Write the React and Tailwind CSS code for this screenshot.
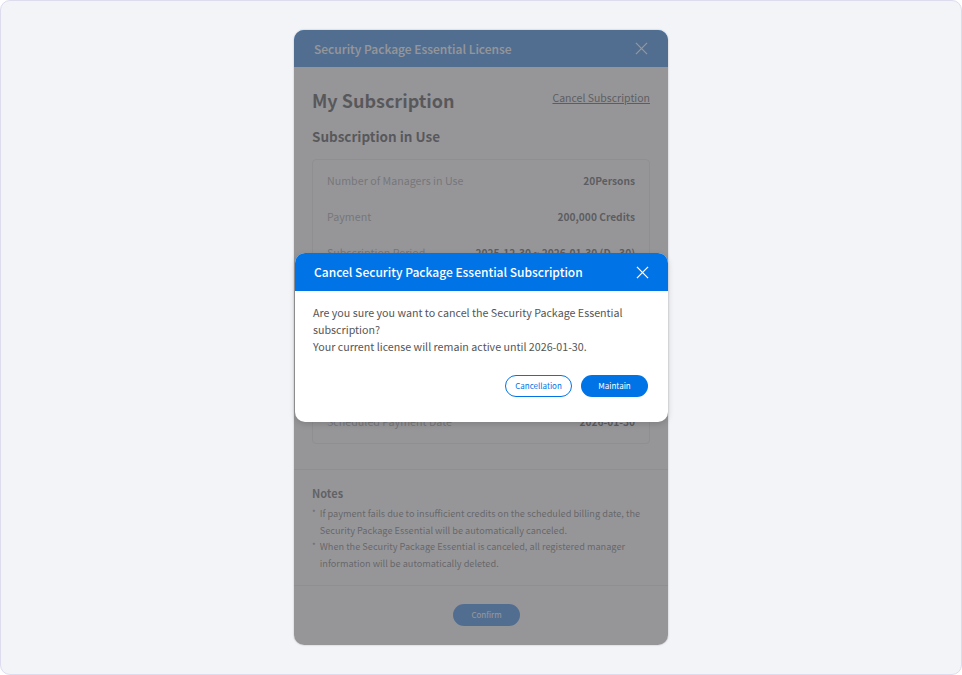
import React from "react";

const font = { fontFamily: '"Noto Sans CJK KR", "Noto Sans", sans-serif' };

function CloseIcon({ className }) {
  return (
    <svg className={className} viewBox="0 0 14 14" fill="none" stroke="currentColor" strokeWidth="1.3">
      <path d="M1 1L13 13M13 1L1 13" />
    </svg>
  );
}

const rows = [
  ["Number of Managers in Use", "20Persons"],
  ["Payment", "200,000 Credits"],
  ["Subscription Period", "2025-12-30 ~ 2026-01-30 (D - 30)"],
  ["Automatic Payment", "Enabled"],
  ["Payment Method", "Credits"],
  ["Remaining Credits", "850,000 Credits"],
];

export default function App() {
  return (
    <div
      className="relative w-full h-[675px] bg-[#f3f4f8] border border-[#dcdcee] rounded-[10px] flex justify-center pt-[29px] overflow-hidden"
      style={font}
    >
      {/* base modal */}
      <div className="relative w-[374px] h-[615px] bg-white rounded-[10px] overflow-hidden flex flex-col shadow-[0_0_2px_rgba(0,0,0,0.25)]">
        <div className="h-[37px] shrink-0 bg-[#0a6fe0] px-[20px] flex items-center justify-between">
          <span className="text-[12px] font-medium text-white">Security Package Essential License</span>
          <CloseIcon className="w-[13px] h-[13px] text-white" />
        </div>

        <div className="px-[18px] pt-[20px] pb-[25px]">
          <div className="flex items-start justify-between">
            <h1 className="text-[18px] font-bold text-[#222] leading-[26px]">My Subscription</h1>
            <span className="text-[10.5px] text-[#333] underline mt-[3px]">Cancel Subscription</span>
          </div>
          <h2 className="mt-[13px] text-[13.5px] font-bold text-[#222] leading-[20px]">Subscription in Use</h2>

          <div className="mt-[13px] border border-[#e4e4e4] rounded-[4px] px-[14px] py-[3px]">
            {rows.map(([k, v]) => (
              <div key={k} className="h-[36px] flex items-center justify-between text-[10.7px]">
                <span className="text-[#8c8c8c]">{k}</span>
                <span className="text-[#333] font-bold text-[10.2px]">{v}</span>
              </div>
            ))}
            <div className="border-t border-[#eeeeee] my-[12px]" />
            <div className="h-[36px] flex items-center justify-between text-[10.7px]">
              <span className="text-[#8c8c8c]">Scheduled Payment Date</span>
              <span className="text-[#333] font-bold text-[10.2px]">2026-01-30</span>
            </div>
          </div>
        </div>

        <div className="border-t border-[#e6e6e6] px-[18px] pt-[15px] pb-[14px]">
          <div className="text-[11px] font-bold text-[#444] leading-[16px]">Notes</div>
          <ul className="mt-[4px] text-[9.2px] text-[#555] leading-[16.5px]">
            <li className="flex gap-[4px]">
              <span className="text-[8px]">*</span>
              <span>
                If payment fails due to insufficient credits on the scheduled billing date, the Security Package
                Essential will be automatically canceled.
              </span>
            </li>
            <li className="flex gap-[4px]">
              <span className="text-[8px]">*</span>
              <span>
                When the Security Package Essential is canceled, all registered manager information will be
                automatically deleted.
              </span>
            </li>
          </ul>
        </div>

        <div className="border-t border-[#e6e6e6] flex-1 flex items-start justify-center pt-[18px] pl-[11px]">
          <button className="w-[67px] h-[22px] rounded-full bg-[#0a6fe0] text-white text-[8px]">Confirm</button>
        </div>

        <div className="absolute inset-0 bg-[rgba(110,110,114,0.72)]" />
      </div>

      {/* confirm dialog */}
      <div className="absolute left-[294px] top-[252px] w-[373px] bg-white rounded-[10px] overflow-hidden shadow-[0_2px_6px_rgba(0,0,0,0.15)]">
        <div className="h-[38px] bg-[#0073e6] px-[19px] flex items-center justify-between">
          <span className="text-[12px] font-medium text-white">Cancel Security Package Essential Subscription</span>
          <CloseIcon className="w-[13px] h-[13px] text-white" />
        </div>
        <div className="px-[18px] pt-[13px] pb-[25px]">
          <p className="text-[10.7px] text-[#555] leading-[17px]">
            Are you sure you want to cancel the Security Package Essential
            <br />
            subscription?
            <br />
            Your current license will remain active until 2026-01-30.
          </p>
          <div className="mt-[20px] flex justify-end gap-[9px] pr-[2px]">
            <button className="w-[67px] h-[22px] rounded-full border border-[#0073e6] text-[#0073e6] text-[8px] bg-white">
              Cancellation
            </button>
            <button className="w-[67px] h-[22px] rounded-full bg-[#0073e6] text-white text-[8px]">Maintain</button>
          </div>
        </div>
      </div>
    </div>
  );
}
